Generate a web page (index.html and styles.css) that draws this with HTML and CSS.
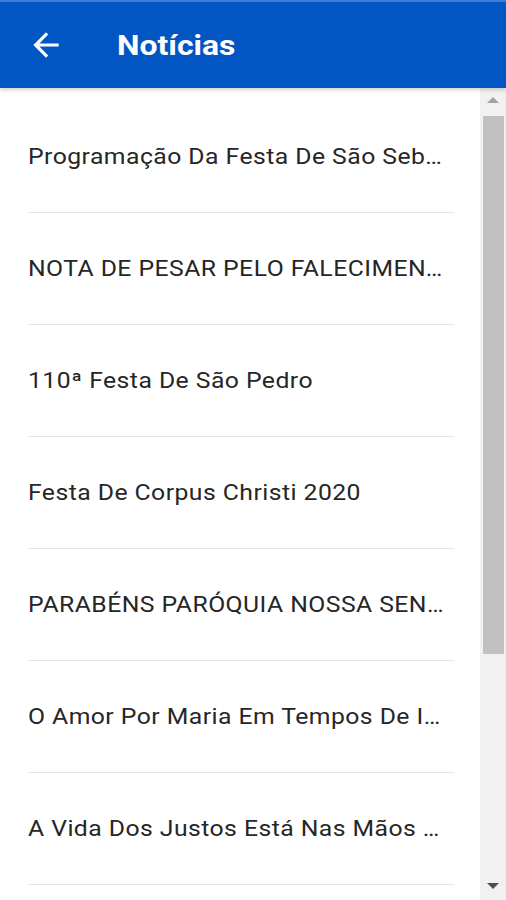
FILE: index.html
```html
<!DOCTYPE html>
<html lang="pt">
<head>
  <meta charset="UTF-8" />
  <meta name="viewport" content="width=device-width, initial-scale=1.0" />
  <title>Notícias</title>
  <link rel="stylesheet" href="styles.css">
</head>
<body>
  <!-- Top bar -->
  <header class="topbar">
    <svg class="back" viewBox="0 0 24 24" width="30" height="30">
      <path d="M20 11H7.83l5.59-5.59L12 4l-8 8 8 8 1.41-1.41L7.83 13H20v-2z" fill="#fff"/>
    </svg>
    <h1>Notícias</h1>
  </header>

  <div class="content">
    <ul class="news">
      <li>Programação Da Festa De São Sebastião 2021</li>
      <li>NOTA DE PESAR PELO FALECIMENTO DO PADRE</li>
      <li>110ª Festa De São Pedro</li>
      <li>Festa De Corpus Christi 2020</li>
      <li>PARABÉNS PARÓQUIA NOSSA SENHORA</li>
      <li>O Amor Por Maria Em Tempos De Isolamento</li>
      <li>A Vida Dos Justos Está Nas Mãos De Deus</li>
      <li>Semana Santa 2020</li>
    </ul>

    <!-- scrollbar -->
    <div class="scrollbar">
      <span class="arrow up"></span>
      <div class="thumb"></div>
      <span class="arrow down"></span>
    </div>
  </div>
</body>
</html>
```

FILE: styles.css
```css
body {
  margin: 0;
  padding: 0;
  height: 900px;
  overflow: hidden;
  font-family: Roboto, 'Noto Sans', sans-serif;
  background: #fff;
  display: flex;
  flex-direction: column;
}

.topbar {
  height: 86px;
  border-top: 2px solid #3f7ad3;
  background-color: #0256c3;
  display: flex;
  align-items: center;
  box-shadow: 0 2px 4px rgba(0, 0, 0, 0.18);
  position: relative;
  z-index: 1;
  flex-shrink: 0;
}

.back {
  width: 40px;
  height: 38px;
  margin-left: 26px;
}

.topbar h1 {
  margin: 2px 0 0 51px;
  color: #fff;
  font-size: 27px;
  font-weight: bold;
  transform: scaleX(1.18);
  transform-origin: left center;
}

.content {
  flex: 1;
  display: flex;
  overflow: hidden;
}

.news {
  flex: 1;
  min-width: 0;
  list-style: none;
  margin: 0;
  padding: 13px 0 0 28px;
}

.news li {
  width: 365px;
  height: 111px;
  line-height: 111px;
  padding-right: 6px;
  border-bottom: 1px solid #e6e6e6;
  font-size: 21.5px;
  letter-spacing: 0.4px;
  color: #262626;
  white-space: nowrap;
  overflow: hidden;
  text-overflow: ellipsis;
  transform: scaleX(1.15);
  transform-origin: left center;
}

.scrollbar {
  width: 26px;
  flex-shrink: 0;
  background: #f1f1f1;
  display: flex;
  flex-direction: column;
  align-items: center;
}

.thumb {
  width: 21px;
  height: 538px;
  background: #c1c1c1;
  margin-left: 1px;
}

.arrow {
  width: 0;
  height: 0;
  border-left: 6px solid transparent;
  border-right: 6px solid transparent;
}

.arrow.up {
  border-bottom: 6px solid #a3a3a3;
  margin: 9px 0 13px;
}

.arrow.down {
  border-top: 6px solid #505050;
  margin-top: auto;
  margin-bottom: 11px;
}
```
